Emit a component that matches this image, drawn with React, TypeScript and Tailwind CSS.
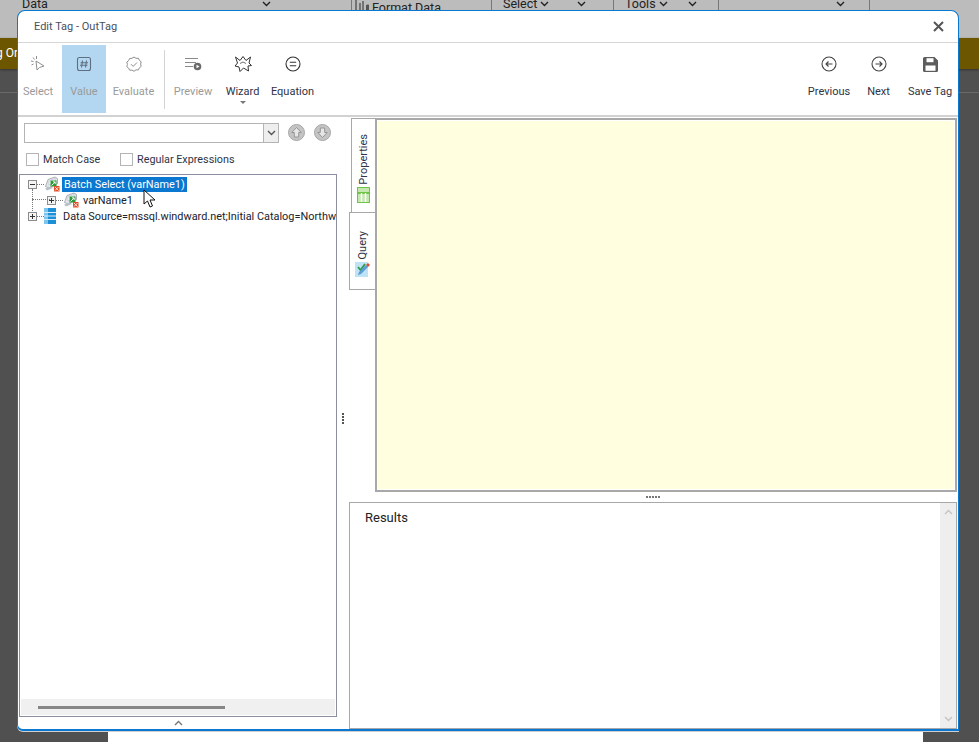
const FONT = "font-['Roboto','Noto_Sans',sans-serif]";

function Chevron({ className = "" }: { className?: string }) {
  return (
    <svg width="9" height="6" viewBox="0 0 9 6" className={className}>
      <path d="M1 1l3.500 3.500L8 1" fill="none" stroke="currentColor" strokeWidth="1.400" />
    </svg>
  );
}

function TopBar() {
  return (
    <div className="flex h-[38px] bg-[#bcbcbc] overflow-hidden text-[#222] text-[12.500px] shrink-0 items-start">
      <div className="w-[352px] h-[10px] pl-[22px] flex items-center border-r border-[#777]">
        <span className="-mt-[1px]">Data</span>
        <Chevron className="ml-[214px] -mt-[2px]" />
      </div>
      <div className="w-[140px] h-[10px] pl-[3px] flex border-r border-[#777] whitespace-nowrap">
        <svg width="14" height="10" viewBox="0 0 14 10" className="shrink-0">
          <path d="M1 0v10M5 3v7M8 1v9" stroke="#444" strokeWidth="1.200" />
          <path d="M11 5a3 3 0 1 1 0 5z" fill="#555" />
        </svg>
        <span className="ml-[3px] leading-[16px]">Format Data</span>
      </div>
      <div className="w-[122px] h-[10px] pl-[11px] flex items-center border-r border-[#777]">
        <span className="-mt-[1px]">Select</span>
        <Chevron className="ml-[3px] -mt-[2px]" />
        <Chevron className="ml-[28px] -mt-[2px]" />
      </div>
      <div className="w-[105px] h-[10px] pl-[11px] flex items-center border-r border-[#777]">
        <span className="-mt-[1px]">Tools</span>
        <Chevron className="ml-[3px] -mt-[2px]" />
        <Chevron className="ml-[20px] -mt-[2px]" />
      </div>
      <div className="w-[151px] h-[10px] pl-[117px] flex items-center border-r border-[#777]">
        <Chevron className="-mt-[2px]" />
      </div>
    </div>
  );
}

function SelectIcon() {
  return (
    <svg width="20" height="20" viewBox="0 0 20 20" fill="none" stroke="#8f8f8f" strokeWidth="1">
      <path d="M8 7l1 9 2.500-2.500 4.500-1.500z" />
      <path d="M5 3.500l1.500 2M3 7l2.500.5M8.500 2v3M3.500 11l2-1" />
    </svg>
  );
}

function ValueIcon() {
  return (
    <svg width="16" height="16" viewBox="0 0 16 16" fill="none" stroke="#5f6f80" strokeWidth="1.100">
      <rect x="1.500" y="1.500" width="13" height="13" rx="2" />
      <path d="M6.500 4.500l-1 7M10.500 4.500l-1 7M4.500 6.700h7.500M4 9.300h7.500" />
    </svg>
  );
}

function EvaluateIcon() {
  return (
    <svg width="16" height="16" viewBox="0 0 16 16" fill="none" stroke="#8f8f8f" strokeWidth="1">
      <path d="M8 1l2 1.300 2.400-.1 1 2.100 1.800 1.500-.6 2.300.6 2.300-1.800 1.400-1 2.100-2.400-.1L8 15.300l-2-1.200-2.400.1-1-2.100-1.800-1.400.6-2.300-.6-2.300 1.800-1.500 1-2.100L6 2.300z" />
      <path d="M5 8.200l2.200 2.200L11 6.500" />
    </svg>
  );
}

function PreviewIcon() {
  return (
    <svg width="18" height="14" viewBox="0 0 18 14" fill="none">
      <path d="M1 1.500h13M1 5.500h11M1 9.500h8" stroke="#8a8a8a" strokeWidth="1" />
      <circle cx="13.500" cy="9.500" r="3.800" fill="#6a6a6a" />
      <path d="M12.500 7.700v3.600L15.500 9.500z" fill="#fff" />
    </svg>
  );
}

function WizardIcon() {
  return (
    <svg width="18" height="16" viewBox="0 0 18 16" fill="none" stroke="#333" strokeWidth="1">
      <path d="M1.500 1l4.500 3.500L9 .5l3 4L16.500 1l-1.500 6 2.500 2.500-3.500.5.500 5L9.500 12 6 15.500 5 11l-4-1 2.500-3z" />
      <path d="M6 7.500l3-1.500 3 1.500" strokeWidth="0.700" />
    </svg>
  );
}

function CircleIcon({ d, color = "#333" }: { d: string; color?: string }) {
  return (
    <svg width="16" height="16" viewBox="0 0 16 16" fill="none" stroke={color} strokeWidth="1.100">
      <circle cx="8" cy="8" r="7" />
      <path d={d} />
    </svg>
  );
}

function SaveIcon() {
  return (
    <svg width="15" height="15" viewBox="0 0 15 15">
      <path d="M1.500 0h10L15 3.500v10a1.500 1.500 0 0 1-1.500 1.500h-12A1.500 1.500 0 0 1 0 13.500v-12A1.500 1.500 0 0 1 1.500 0z" fill="#5c5c5c" />
      <rect x="3.500" y="1.200" width="7" height="4" fill="#fff" />
      <rect x="2.500" y="8.500" width="10" height="5.300" fill="#fff" />
    </svg>
  );
}

function ToolButton({
  label,
  w,
  icon,
  dim,
  active,
  menu,
}: {
  label: string;
  w: string;
  icon: React.ReactNode;
  dim?: boolean;
  active?: boolean;
  menu?: boolean;
}) {
  return (
    <div className={`${w} h-[68px] mt-[2px] flex flex-col items-center shrink-0 ${active ? "bg-[#b3d7f0]" : ""}`}>
      <div className="h-[24px] mt-[7px] flex items-center justify-center">{icon}</div>
      <div className={`mt-[7px] text-[11px] leading-[18px] whitespace-nowrap ${dim ? "text-[#9a9a9a]" : "text-[#2f3345]"}`}>{label}</div>
      {menu && <div className="w-0 h-0 border-x-[3px] border-x-transparent border-t-[3px] border-t-[#777]" />}
    </div>
  );
}

function Toolbar() {
  return (
    <div className="flex h-[72px] shrink-0 pr-[1px]">
      <ToolButton label="Select" w="w-[44px] pr-[4px]" icon={<SelectIcon />} dim />
      <ToolButton label="Value" w="w-[44px]" icon={<ValueIcon />} dim active />
      <ToolButton label="Evaluate" w="w-[55px]" icon={<EvaluateIcon />} dim />
      <div className="w-px h-[59px] bg-[#d4d4d4] mt-[7px] mx-[3px]" />
      <ToolButton label="Preview" w="w-[50px]" icon={<PreviewIcon />} dim />
      <ToolButton label="Wizard" w="w-[49px]" icon={<WizardIcon />} menu />
      <ToolButton label="Equation" w="w-[51px]" icon={<CircleIcon d="M4.800 6.200h6.400M4.800 9.800h6.400" />} />
      <div className="flex-1" />
      <ToolButton label="Previous" w="w-[50px]" icon={<CircleIcon d="M11.500 8H5M7.500 5.500L5 8l2.500 2.500" color="#444" />} />
      <ToolButton label="Next" w="w-[49px]" icon={<CircleIcon d="M4.500 8H11M8.500 5.500L11 8l-2.500 2.500" color="#444" />} />
      <ToolButton label="Save Tag" w="w-[54px]" icon={<SaveIcon />} />
    </div>
  );
}

function RoundArrow({ down }: { down?: boolean }) {
  return (
    <svg width="17" height="17" viewBox="0 0 17 17">
      <circle cx="8.500" cy="8.500" r="8" fill="#c4c4c4" stroke="#a6a6a6" />
      <path d={down ? "M8.500 13.500L3.800 8.500H6.300V4h4.400v4.500h2.500z" : "M8.500 3.500L13.200 8.500H10.700V13H6.300V8.500H3.800z"} fill="#e6e6e6" stroke="#8e8e8e" strokeWidth="0.900" />
    </svg>
  );
}

function Check({ label, w }: { label: string; w?: string }) {
  return (
    <div className={`flex items-center gap-[4px] ${w ?? ""}`}>
      <div className="w-[13px] h-[13px] border border-[#b4b4b4] bg-white shrink-0" />
      <span className="text-[10.800px] text-[#2f3345] whitespace-nowrap mt-[2px]">{label}</span>
    </div>
  );
}

function Expander({ open }: { open?: boolean }) {
  return (
    <svg width="9" height="9" viewBox="0 0 9 9" className="shrink-0">
      <rect x="0.500" y="0.500" width="8" height="8" fill="#f4f4f4" stroke="#8c8c8c" />
      <path d={open ? "M2 4.500h5" : "M2 4.500h5M4.500 2v5"} stroke="#333" />
    </svg>
  );
}

function Dots({ w }: { w: string }) {
  return <div className={`${w} border-t border-dotted border-[#777] shrink-0`} />;
}

function SqlIcon() {
  return (
    <svg width="16" height="16" viewBox="0 0 16 16" className="shrink-0">
      <path d="M4 3.500L11 1l2.500 1.500v5L5 12 1.500 10.500z" fill="#e2e6ea" stroke="#8b949c" strokeWidth="0.700" />
      <path d="M5 5l6-2.500v4L5 9z" fill="#fff" stroke="#a8b0b8" strokeWidth="0.500" />
      <path d="M1 12.500l6-2 2 1.500-6 2.500z" fill="#b8c0c8" />
      <rect x="6.500" y="4.500" width="6" height="6" fill="#2f9a3c" />
      <path d="M7.500 9.500l3.500-3.500M9 5.800h2.200V8" stroke="#fff" strokeWidth="0.900" fill="none" />
      <rect x="10" y="10" width="5.500" height="5.500" fill="#e2502a" />
      <path d="M11 11l3.500 3.500M14.500 11L11 14.500" stroke="#fff" strokeWidth="0.800" />
    </svg>
  );
}

function DbIcon() {
  return (
    <svg width="12" height="16" viewBox="0 0 12 16" className="shrink-0">
      <rect width="12" height="16" fill="#1d8fd6" />
      <rect x="0" y="0" width="4" height="16" fill="#7cc5ee" />
      <path d="M0 4.500h12M0 8h12M0 11.500h12" stroke="#d8effb" />
    </svg>
  );
}

function Tree() {
  return (
    <div className="relative flex-1 min-h-0 mt-[6px] border border-[#8a8f9f] bg-white flex flex-col overflow-hidden">
      <div className="text-[10.900px] text-[#20222c] whitespace-nowrap">
        <div className="h-[16px] flex items-center pl-[8px] mt-[1px]">
          <Expander open />
          <Dots w="w-[7px]" />
          <SqlIcon />
          <span className="ml-[2px] bg-[#0a78d0] text-white px-[2px] leading-[15px]">Batch Select (varName1)</span>
        </div>
        <div className="h-[16px] flex items-center pl-[27px]">
          <Expander />
          <Dots w="w-[7px]" />
          <SqlIcon />
          <span className="ml-[4px] mt-[2px]">varName1</span>
        </div>
        <div className="h-[16px] flex items-center pl-[8px]">
          <Expander />
          <Dots w="w-[7px]" />
          <DbIcon />
          <span className="ml-[7px] mt-[2px]">Data Source=mssql.windward.net;Initial Catalog=Northwind</span>
        </div>
      </div>
      <div className="absolute left-[12px] top-[14px] h-[22px] border-l border-dotted border-[#777]" />
      <div className="absolute left-[12px] top-[24px] w-[18px] border-t border-dotted border-[#777]" />
      <div className="mt-auto mx-[1px] mb-[1px] h-[16px] bg-[#f0f0f0] flex items-center pl-[17px]">
        <div className="w-[187px] h-[3px] bg-[#868686] mt-[1px]" />
      </div>
      <svg width="14" height="20" viewBox="0 0 14 20" className="absolute left-[123px] top-[14px]">
        <path d="M1 1v14l3.500-3 2.500 6 2.500-1-2.500-6h5z" fill="#fff" stroke="#111" strokeWidth="1" />
      </svg>
    </div>
  );
}

function LeftPanel() {
  return (
    <div className="w-[318px] shrink-0 flex flex-col h-full">
      <div className="flex items-center pl-[5px] mt-[5px] h-[21px]">
        <div className="w-[255px] h-[20px] border border-[#b4b4b4] bg-white flex justify-end">
          <div className="w-[15px] border-l border-[#b4b4b4] bg-[#eeeeee] text-[#555] flex items-center justify-center">
            <Chevron />
          </div>
        </div>
        <div className="ml-[9px]"><RoundArrow /></div>
        <div className="ml-[9px]"><RoundArrow down /></div>
      </div>
      <div className="flex items-center pl-[7px] mt-[8px] h-[17px]">
        <Check label="Match Case" w="w-[94px]" />
        <Check label="Regular Expressions" />
      </div>
      <Tree />
    </div>
  );
}

function TabLabel({ label, icon, active }: { label: string; icon: React.ReactNode; active?: boolean }) {
  return (
    <div className={`flex flex-col items-center justify-end border border-r-0 border-[#a8a8a8] bg-white ${active ? "w-[26px] h-[78px] -ml-[2px] pb-[12px]" : "w-[24px] h-[94px] pb-[9px] border-b-0"}`}>
      <span className="[writing-mode:vertical-rl] rotate-180 text-[11px] text-[#2f3345] leading-none mb-[2px]">{label}</span>
      {icon}
    </div>
  );
}

function TableIcon() {
  return (
    <svg width="13" height="16" viewBox="0 0 13 16">
      <rect x="0.500" y="0.500" width="12" height="15" fill="#c4e8b0" stroke="#6cc644" />
      <path d="M1 6h11" stroke="#6cc644" strokeWidth="2" />
      <path d="M4.500 6v9M8.500 6v9" stroke="#fff" strokeWidth="1.500" />
    </svg>
  );
}

function QueryIcon() {
  return (
    <svg width="15" height="16" viewBox="0 0 15 16">
      <rect width="13" height="15" y="1" fill="#bfe3f5" />
      <path d="M3 6l2.500 3L10 3" stroke="#2e9a48" strokeWidth="1.800" fill="none" />
      <path d="M3 14l1-3 7-7 2 2-7 7z" fill="#5a9bd8" />
      <path d="M11 4l2-2 2 2-2 2z" fill="#d8503a" />
    </svg>
  );
}

function RightPanel() {
  return (
    <div className="flex-1 min-w-0 flex flex-col h-full">
      <div className="flex h-[375px] shrink-0 pt-[1px]">
        <div className="w-[26px] pl-[2px] flex flex-col shrink-0">
          <TabLabel label="Properties" icon={<TableIcon />} />
          <TabLabel label="Query" icon={<QueryIcon />} active />
        </div>
        <div className="flex-1 border-2 border-[#a8a8a8] bg-[#ffffe0] outline outline-white -outline-offset-[3px]" />
      </div>
      <div className="h-[10px] flex items-center justify-center gap-px shrink-0">
        {[0, 1, 2, 3, 4].map((i) => (
          <div key={i} className="w-[2px] h-[2px] bg-[#777]" />
        ))}
      </div>
      <div className="h-[227px] shrink-0 border border-[#a8a8a8] bg-white flex">
        <div className="flex-1 pl-[15px] pt-[5px] text-[13px] text-[#222]">Results</div>
        <div className="w-[16px] bg-[#eeeeee] flex flex-col justify-between items-center py-[6px] text-[#c4c4c4]">
          <Chevron className="rotate-180" />
          <Chevron />
        </div>
      </div>
    </div>
  );
}

function Dialog() {
  return (
    <div className="absolute left-[17px] top-[10px] w-[942px] h-[721px] bg-white border border-[#0a78d0] border-b-2 rounded-t-[8px] rounded-bl-[6px] flex flex-col shadow-[0_1px_0_#cfcfcf] overflow-hidden">
      <div className="h-[32px] shrink-0 flex items-center justify-between pl-[16px] pr-[14px] border-b border-[#d6d6d6] text-[11px] text-[#4a4f60]">
        <span className="mt-[2px]">Edit Tag - OutTag</span>
        <svg width="11" height="11" viewBox="0 0 11 11">
          <path d="M1 1l9 9M10 1l-9 9" stroke="#555" strokeWidth="2" />
        </svg>
      </div>
      <Toolbar />
      <div className="h-[2px] shrink-0 bg-[#d2d2d2]" />
      <div className="flex-1 min-h-0 flex pl-[1px]">
        <div className="flex flex-col w-[318px] shrink-0">
          <div className="h-[600px] shrink-0"><LeftPanel /></div>
          <div className="flex-1 flex items-center justify-center text-[#777]">
            <Chevron className="rotate-180" />
          </div>
        </div>
        <div className="w-[12px] shrink-0 flex flex-col items-center justify-center gap-px pb-[10px]">
          {[0, 1, 2, 3].map((i) => (
            <div key={i} className="w-[2px] h-[2px] bg-[#555]" />
          ))}
        </div>
        <div className="flex-1 min-w-0 pr-[1px] pb-[1px]"><RightPanel /></div>
      </div>
    </div>
  );
}

export default function App() {
  return (
    <div className={`relative w-[979px] h-[742px] overflow-hidden bg-[#505050] flex flex-col ${FONT}`}>
      <TopBar />
      <div className="h-[31px] bg-[#6d5600] text-white text-[12px] shrink-0 shadow-[0_1px_2px_#333] overflow-hidden whitespace-nowrap leading-[31px] -indent-[4px]">g Or</div>
      <div className="mt-[23px] h-px bg-[#6a6a6a] shrink-0" />
      <div className="absolute left-[108px] top-[725px] w-[815px] h-[17px] bg-white" />
      <Dialog />
    </div>
  );
}
